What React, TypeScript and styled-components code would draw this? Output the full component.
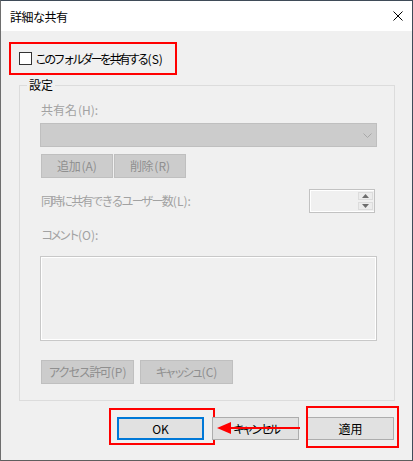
import React from "react";
import styled, { createGlobalStyle } from "styled-components";

const Global = createGlobalStyle`
  html, body { margin: 0; padding: 0; background: #ffffff; }
  * { box-sizing: border-box; }
  body {
    font-family: "Noto Sans CJK JP", "Noto Sans", sans-serif;
    font-size: 12px;
    white-space: nowrap;
  }
`;

const Key = styled.span`
  letter-spacing: 0;
  margin-left: 1px;
`;

const Window = styled.div`
  width: 413px;
  height: 461px;
  display: flex;
  flex-direction: column;
  border: 1px solid #3f4b58;
  border-left-color: #6e6e6e;
  border-bottom-color: #5e5e5e;
  background: #f0f0f0;
`;

const TitleBar = styled.div`
  height: 30px;
  flex: none;
  display: flex;
  align-items: center;
  justify-content: space-between;
  background: #ffffff;
  padding: 0 9px 0 9px;
`;

const Title = styled.span`
  color: #000;
  line-height: 16px;
  padding-top: 1px;
  letter-spacing: -0.5px;
`;

const Body = styled.div`
  flex: 1;
  display: flex;
  flex-direction: column;
  padding: 11px 17px 0 8px;
`;

const ShareBox = styled.div`
  width: 168px;
  height: 33px;
  border: 2px solid #ff0000;
  display: flex;
  align-items: center;
  gap: 3px;
  padding-left: 8px;
`;

const CheckBox = styled.span`
  width: 13px;
  height: 13px;
  border: 1px solid #333333;
  background: #ffffff;
  flex: none;
`;

const CheckLabel = styled.span`
  color: #000;
  line-height: 16px;
  letter-spacing: -2.7px;
`;

const Group = styled.div`
  position: relative;
  margin: 10px 0 0 10px;
  width: 376px;
  border: 1px solid #dcdcdc;
  padding: 16px 17px 16px 20px;
  display: flex;
  flex-direction: column;
`;

const Legend = styled.span`
  position: absolute;
  top: -9px;
  left: 7px;
  padding: 0 2px;
  background: #f0f0f0;
  color: #000;
  line-height: 16px;
`;

const FieldLabel = styled.span<{ $mt?: number; $ls?: number }>`
  color: #a2a2a2;
  line-height: 16px;
  margin-top: ${(p) => p.$mt ?? 0}px;
  padding-left: 1px;
  letter-spacing: ${(p) => p.$ls ?? 0}px;
`;

const Select = styled.div`
  margin-top: 5px;
  height: 24px;
  background: #cccccc;
  border: 1px solid #bfbfbf;
  display: flex;
  align-items: center;
  justify-content: flex-end;
  padding-right: 4px;
`;

const ButtonRow = styled.div<{ $mt: number; $gap: number }>`
  display: flex;
  gap: ${(p) => p.$gap}px;
  margin-top: ${(p) => p.$mt}px;
  padding-left: 1px;
`;

const DisabledButton = styled.div<{ $w: number; $ls: number }>`
  width: ${(p) => p.$w}px;
  height: 24px;
  background: #cccccc;
  border: 1px solid #bfbfbf;
  color: #8f8f8f;
  display: flex;
  align-items: center;
  justify-content: center;
  line-height: 16px;
  letter-spacing: ${(p) => p.$ls}px;
`;

const UserRow = styled.div`
  margin-top: 11px;
  height: 24px;
  display: flex;
  align-items: center;
  justify-content: space-between;
  padding-right: 2px;
`;

const Spin = styled.div`
  width: 66px;
  height: 24px;
  border: 1px solid #c2c2c2;
  box-shadow: inset 0 0 0 1px #ffffff;
  background: #f0f0f0;
  display: flex;
  justify-content: flex-end;
  padding: 1px 0;
`;

const SpinCol = styled.div`
  width: 17px;
  display: flex;
  flex-direction: column;
  gap: 2px;
  padding: 1px;
  background: #f0f0f0;
`;

const SpinBtn = styled.div`
  flex: 1;
  background: #ececec;
  border: 1px solid #dcdcdc;
  display: flex;
  align-items: center;
  justify-content: center;
`;

const Comment = styled.div`
  margin-top: 13px;
  height: 85px;
  border: 1px solid #c8c8c8;
  box-shadow: inset 0 0 0 1px #ffffff;
  background: #f0f0f0;
`;

const Footer = styled.div`
  display: flex;
  justify-content: flex-end;
  gap: 8px;
  margin-top: 16px;
  padding-right: 1px;
`;

const Slot = styled.div`
  position: relative;
`;

const DialogButton = styled.div<{ $focused?: boolean; $ls?: number }>`
  width: 87px;
  height: 23px;
  background: #e1e1e1;
  border: ${(p) => (p.$focused ? "2px solid #0078d7" : "1px solid #adadad")};
  color: #000;
  display: flex;
  align-items: center;
  justify-content: center;
  line-height: 16px;
  letter-spacing: ${(p) => p.$ls ?? 0}px;
`;

const Mark = styled.div<{ $t: number; $r: number; $b: number; $l: number }>`
  position: absolute;
  top: ${(p) => p.$t}px;
  right: ${(p) => p.$r}px;
  bottom: ${(p) => p.$b}px;
  left: ${(p) => p.$l}px;
  border: 2px solid #ff0000;
  pointer-events: none;
`;

const Arrow = styled.svg`
  position: absolute;
  left: 5px;
  top: 5px;
  overflow: visible;
`;

export default function App() {
  return (
    <>
      <Global />
      <Window>
        <TitleBar>
          <Title>詳細な共有</Title>
          <svg width="10" height="10" viewBox="0 0 10 10">
            <path d="M0.5 0.5 L9.5 9.5 M9.5 0.5 L0.5 9.5" stroke="#000" strokeWidth="1" />
          </svg>
        </TitleBar>
        <Body>
          <ShareBox>
            <CheckBox />
            <CheckLabel>
              このフォルダーを共有する<Key>(S)</Key>
            </CheckLabel>
          </ShareBox>
          <Group>
            <Legend>設定</Legend>
            <FieldLabel>
              共有名<Key>(H):</Key>
            </FieldLabel>
            <Select>
              <svg width="9" height="5" viewBox="0 0 9 5">
                <polyline points="0.5,0.5 4.5,4.5 8.5,0.5" fill="none" stroke="#a8a8a8" strokeWidth="1" />
              </svg>
            </Select>
            <ButtonRow $mt={7} $gap={1}>
              <DisabledButton $w={72} $ls={-0.3}>
                追加<Key>(A)</Key>
              </DisabledButton>
              <DisabledButton $w={72} $ls={-0.3}>
                削除<Key>(R)</Key>
              </DisabledButton>
            </ButtonRow>
            <UserRow>
              <FieldLabel $ls={-1.9}>
                同時に共有できるユーザー数<Key>(L):</Key>
              </FieldLabel>
              <Spin>
                <SpinCol>
                  <SpinBtn>
                    <svg width="7" height="4" viewBox="0 0 7 4">
                      <polygon points="3.5,0 7,4 0,4" fill="#6d6d6d" />
                    </svg>
                  </SpinBtn>
                  <SpinBtn>
                    <svg width="7" height="4" viewBox="0 0 7 4">
                      <polygon points="0,0 7,0 3.5,4" fill="#6d6d6d" />
                    </svg>
                  </SpinBtn>
                </SpinCol>
              </Spin>
            </UserRow>
            <FieldLabel $mt={14} $ls={-3}>
              コメント<Key>(O):</Key>
            </FieldLabel>
            <Comment />
            <ButtonRow $mt={19} $gap={6}>
              <DisabledButton $w={93} $ls={-1.7}>
                アクセス許可<Key>(P)</Key>
              </DisabledButton>
              <DisabledButton $w={93} $ls={-3}>
                キャッシュ<Key>(C)</Key>
              </DisabledButton>
            </ButtonRow>
          </Group>
          <Footer>
            <Slot>
              <DialogButton $focused>OK</DialogButton>
              <Mark $t={-9} $r={-11} $b={-5} $l={-8} />
            </Slot>
            <Slot>
              <DialogButton $ls={-3}>キャンセル</DialogButton>
              <Arrow width="83" height="12" viewBox="0 0 83 12">
                <polygon points="0,6 14,0 14,12" fill="#ff0000" />
                <rect x="13" y="5" width="70" height="2" fill="#ff0000" />
              </Arrow>
            </Slot>
            <Slot>
              <DialogButton>適用</DialogButton>
              <Mark $t={-11} $r={-5} $b={-8} $l={-1} />
            </Slot>
          </Footer>
        </Body>
      </Window>
    </>
  );
}
